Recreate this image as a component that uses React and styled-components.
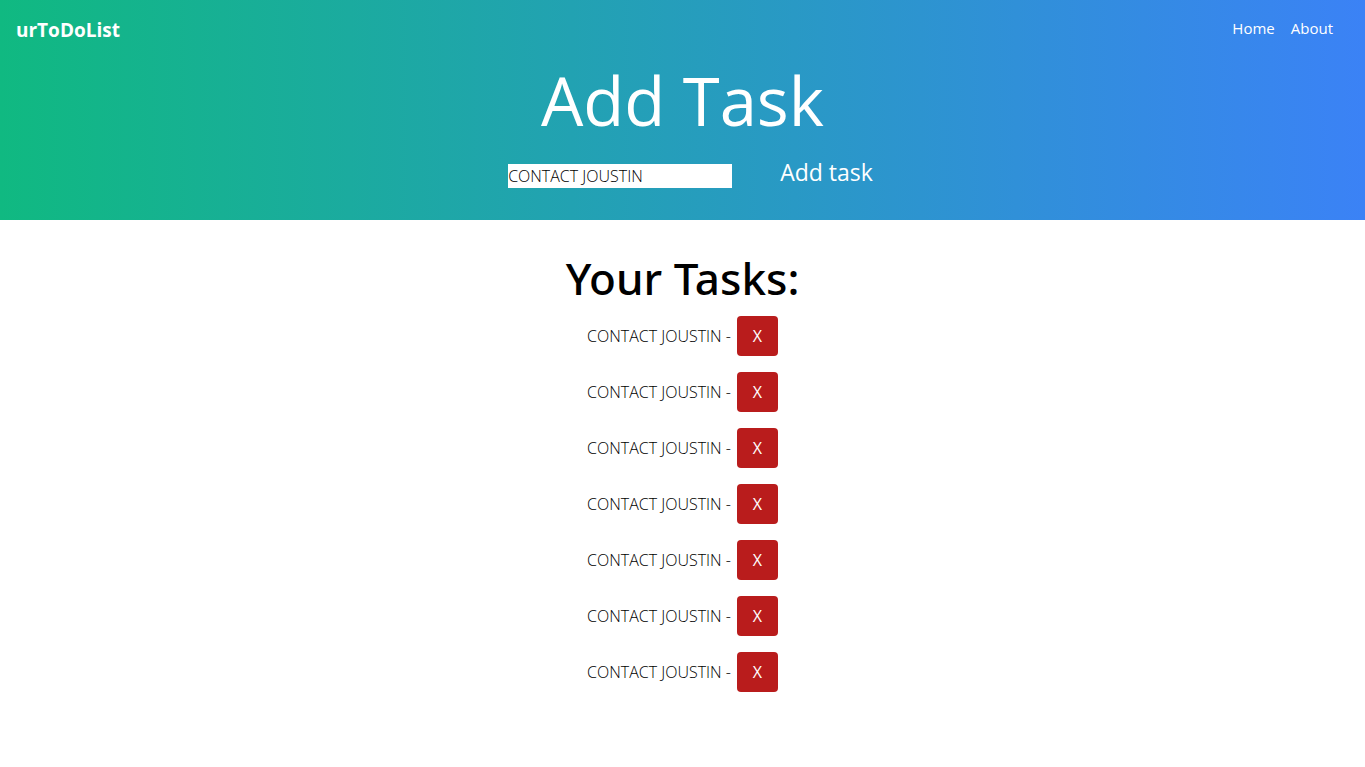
import React, { useState } from "react";
import styled, { createGlobalStyle } from "styled-components";

const GlobalStyle = createGlobalStyle`
  *, *::before, *::after { box-sizing: border-box; }
  body {
    margin: 0;
    background: #fff;
    color: #000;
    font-family: "Segoe UI", "Open Sans", "Noto Sans", sans-serif;
    font-size: 16px;
    line-height: 24px;
  }
  h1, h2, ul { margin: 0; padding: 0; }
  button, input { font: inherit; }
`;

const Header = styled.header`
  padding-bottom: 32px;
  color: #fff;
  text-align: center;
  background: linear-gradient(to right, #10b981, #3b82f6);
`;

const NavBar = styled.nav`
  display: flex;
  justify-content: space-between;
  padding: 16px 32px 0 16px;
`;

const Brand = styled.a`
  color: inherit;
  font-size: 19px;
  font-weight: 700;
  line-height: 28px;
  text-decoration: none;
`;

const NavLinks = styled.div`
  display: flex;
  gap: 16px;
`;

const NavLink = styled.a`
  color: inherit;
  font-size: 15px;
  text-decoration: none;
`;

const Title = styled.h1`
  margin-top: 20px;
  font-size: 67px;
  font-weight: 400;
  line-height: 72px;
`;

const TaskForm = styled.form`
  display: flex;
  justify-content: center;
  align-items: flex-end;
  gap: 48px;
  margin-top: 20px;
  padding-left: 16px;
`;

const TaskInput = styled.input`
  width: 224px;
  height: 24px;
  padding: 0;
  border: 0;
  outline: 0;
  background: #fff;
  color: #000;
  font-size: 16px;
  font-weight: 300;
`;

const AddButton = styled.button`
  padding: 0;
  border: 0;
  background: transparent;
  color: inherit;
  font-size: 23px;
  line-height: 32px;
  cursor: pointer;
`;

const Main = styled.main`
  padding: 32px 16px;
  text-align: center;
`;

const Heading = styled.h2`
  font-family: "Segoe UI", "Noto Sans", sans-serif;
  font-size: 44px;
  font-weight: 500;
  line-height: 52px;
`;

const TaskList = styled.ul`
  display: flex;
  flex-direction: column;
  gap: 16px;
  margin-top: 12px;
  list-style: none;
`;

const Task = styled.li`
  display: flex;
  justify-content: center;
  align-items: center;
  gap: 6px;
  font-weight: 300;
`;

const DeleteButton = styled.button`
  width: 41px;
  height: 40px;
  padding: 0;
  border: 0;
  border-radius: 4px;
  background: #b91c1c;
  color: #fff;
  font-size: 16px;
  font-weight: 400;
  cursor: pointer;
`;

export default function App() {
  const [draft, setDraft] = useState("CONTACT JOUSTIN");
  const [tasks, setTasks] = useState(() =>
    Array.from({ length: 7 }, (_, id) => ({ id, name: "CONTACT JOUSTIN" }))
  );

  const addTask = (event) => {
    event.preventDefault();
    setTasks([...tasks, { id: Date.now(), name: draft }]);
  };

  return (
    <>
      <GlobalStyle />
      <Header>
        <NavBar>
          <Brand href="#">urToDoList</Brand>
          <NavLinks>
            <NavLink href="#home">Home</NavLink>
            <NavLink href="#about">About</NavLink>
          </NavLinks>
        </NavBar>
        <Title>Add Task</Title>
        <TaskForm onSubmit={addTask}>
          <TaskInput
            aria-label="Task"
            value={draft}
            onChange={(event) => setDraft(event.target.value)}
          />
          <AddButton type="submit">Add task</AddButton>
        </TaskForm>
      </Header>
      <Main>
        <Heading>Your Tasks:</Heading>
        <TaskList>
          {tasks.map((task) => (
            <Task key={task.id}>
              <span>{task.name} -</span>
              <DeleteButton
                type="button"
                aria-label={`Delete ${task.name}`}
                onClick={() => setTasks(tasks.filter((t) => t.id !== task.id))}
              >
                X
              </DeleteButton>
            </Task>
          ))}
        </TaskList>
      </Main>
    </>
  );
}
